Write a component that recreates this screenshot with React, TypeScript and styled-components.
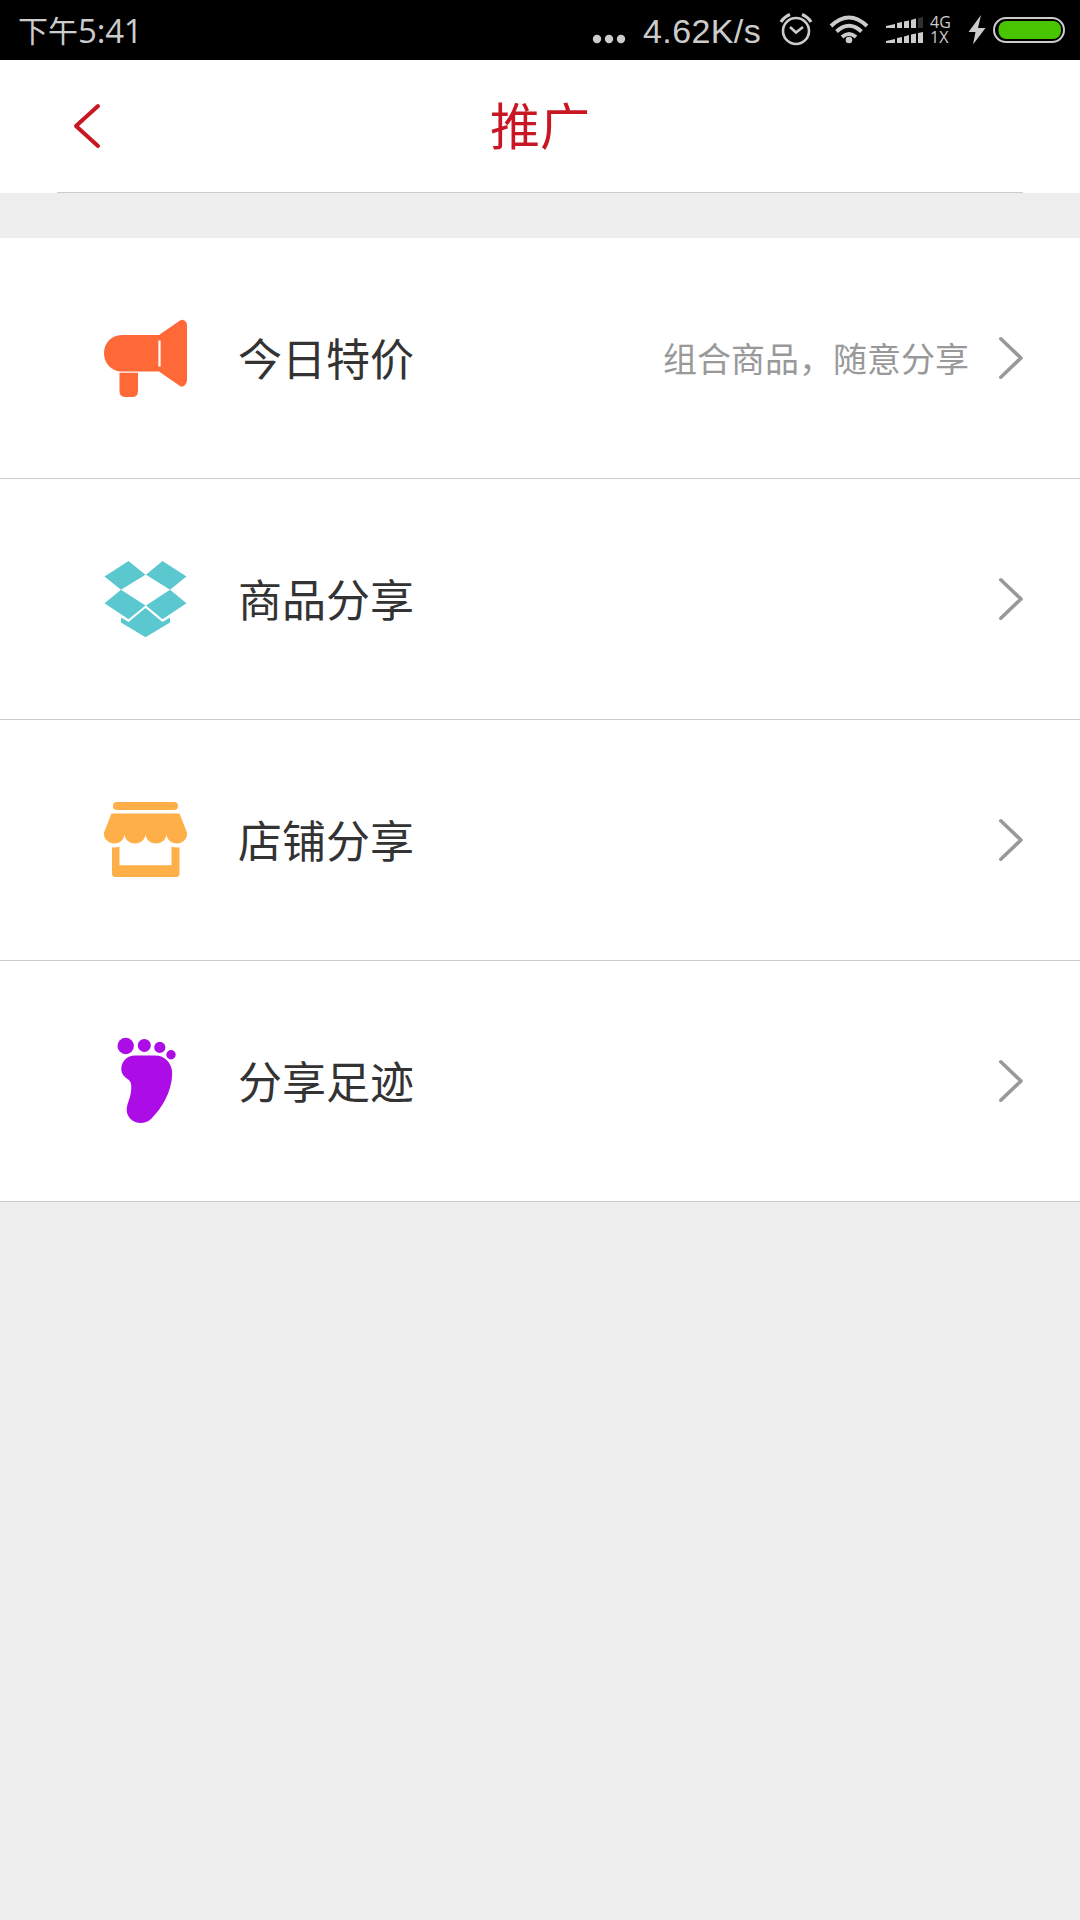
import React from "react";
import styled, { createGlobalStyle } from "styled-components";

const Global = createGlobalStyle`
  * { box-sizing: border-box; }
  body { margin: 0; background: #eee; font-family: "Noto Sans CJK SC", "Noto Sans", sans-serif; }
`;

const Screen = styled.div`
  width: 1080px;
  height: 1920px;
  display: flex;
  flex-direction: column;
  background: #eee;
`;

const StatusBar = styled.header`
  height: 60px;
  display: flex;
  justify-content: space-between;
  padding: 0 14px 0 18px;
  background: #000;
  color: #ccc;
`;

const Clock = styled.div`
  display: flex;
  font-size: 30px;
  line-height: 59px;
  white-space: nowrap;
`;

const Digits = styled.span`
  font-family: "Open Sans", sans-serif;
  font-size: 33px;
  line-height: 62px;
  letter-spacing: -0.2px;
`;

const StatusItems = styled.div`
  display: flex;
  height: 60px;
`;

const Speed = styled.div`
  font-family: "Liberation Sans", sans-serif;
  font-size: 34px;
  line-height: 62px;
  letter-spacing: 0.4px;
  width: 119px;
  margin: 0 17px;
  white-space: nowrap;
`;

const Network = styled.div`
  display: flex;
  flex-direction: column;
  width: 38px;
  margin-left: 7px;
  padding-top: 15px;
  font-family: "Open Sans", sans-serif;
  font-size: 16px;
  line-height: 15px;
`;

const TitleBar = styled.nav`
  height: 133px;
  flex: none;
  display: grid;
  grid-template-columns: 1fr auto 1fr;
  padding: 0 57px;
  background: #fff;
`;

const Cell = styled.div`
  border-bottom: 1px solid #ccc;
  display: flex;
`;

const Title = styled.h1`
  margin: 0;
  font-size: 50px;
  font-weight: 400;
  line-height: 126px;
  color: #c91623;
  border-bottom: 1px solid #ccc;
`;

const List = styled.ul`
  list-style: none;
  margin: 45px 0 0;
  padding: 0;
`;

const Row = styled.li`
  height: 241px;
  display: flex;
  align-items: center;
  padding: 0 55px 0 102px;
  background: #fff;
  border-bottom: 1px solid #ccc;
`;

const Label = styled.span`
  margin-left: 48px;
  padding-bottom: 2px;
  flex: 1;
  font-size: 44px;
  line-height: 64px;
  color: #333;
`;

const Hint = styled.span`
  padding-bottom: 1px;
  font-size: 34px;
  line-height: 50px;
  color: #999;
`;

const Drawing = styled.svg`
  display: block;
  flex: none;
`;

const Megaphone = () => (
  <Drawing width="88" height="88" viewBox="0 0 88 88" fill="#ff6938">
    <path d="M20 21H57L78 6.500Q80.500 5 82.500 6.500Q85 8 85 11V66Q85 69.500 82.500 71.500Q80.500 73.500 78 72L57 57.500H20C9 57.500 2 49 2 39.200S9 21 20 21Z" />
    <path d="M17.500 58.700H36V77Q36 83 30 83H23.500Q17.500 83 17.500 77Z" />
    <path d="M57.500 26.500V52.500" stroke="#fff" strokeWidth="2.200" />
  </Drawing>
);

const Box = () => (
  <Drawing width="88" height="88" viewBox="0 0 88 88" fill="#5bc8cf">
    <path d="M26.500 6L43.500 19.800L19 34.800L2.500 21.500ZM60.500 6L84.500 21.500L68 34.800L44 19.800ZM19 34.800L43.500 50.500L26.500 64.300L2.500 48.300ZM68 34.800L84.500 48.300L60.500 64.300L44 50.500Z" />
    <path d="M43.500 53L60.500 67L68 62.500V67.500L43.500 82.300L19 67.500V62.500L26.500 67Z" />
  </Drawing>
);

const Shop = () => (
  <Drawing width="88" height="88" viewBox="0 0 88 88" fill="#ffaf48">
    <rect x="11" y="6" width="65" height="8" rx="4" />
    <path d="M9.500 17.500H77.500L85 36.500C86 42 81 47.500 75 47.500C69 47.500 64.500 43 64.500 38C64.500 43 60 47.500 54 47.500S43.500 43 43.500 38C43.500 43 39 47.500 33 47.500S22.500 43 22.500 38C22.500 43 18 47.500 12.500 47.500C6 47.500 1 42 2 36.500Z" />
    <path d="M10 51.200Q14 52 17.500 50.500V69.300H69.500V50.500Q73 52 77.500 51.200V77.500Q77.500 81 74 81H13.500Q10 81 10 77.500Z" />
  </Drawing>
);

const Foot = () => (
  <Drawing width="88" height="88" viewBox="0 0 88 88" fill="#ac0de6">
    <circle cx="23.700" cy="9" r="8.200" />
    <circle cx="42.300" cy="8.400" r="6.500" />
    <circle cx="57.800" cy="10.400" r="5.600" />
    <circle cx="69" cy="17.800" r="4.700" />
    <path d="M33 18.500H53C63 18.500 70.300 26 70.200 37C69.700 55 60 71 49.500 81.500C46 85 42 86 38.700 86C31 86 24.700 80 24.700 73C24.700 66 29.300 61 29.300 50C29.300 44 27 43 23.500 40.500C20.500 38 19.300 35.500 19.300 32.300C19.300 24.500 25 18.500 33 18.500Z" />
  </Drawing>
);

const Arrow = styled(Drawing)`
  margin-left: 29px;
`;

const rows = [
  { label: "今日特价", hint: "组合商品，随意分享", Icon: Megaphone },
  { label: "商品分享", hint: "", Icon: Box },
  { label: "店铺分享", hint: "", Icon: Shop },
  { label: "分享足迹", hint: "", Icon: Foot },
];

export default function App() {
  return (
    <Screen>
      <Global />
      <StatusBar>
        <Clock>下午<Digits>5:41</Digits></Clock>
        <StatusItems>
          <Drawing width="35" height="60" viewBox="591 0 35 60" fill="#ccc">
            <circle cx="597" cy="39" r="4.200" />
            <circle cx="609" cy="39" r="4.200" />
            <circle cx="621" cy="39" r="4.200" />
          </Drawing>
          <Speed>4.62K/s</Speed>
          <Drawing width="144" height="60" viewBox="779 0 144 60" fill="none" stroke="#ccc">
            <circle cx="796" cy="31" r="13" strokeWidth="2.600" />
            <path d="M790 27L796 32.500L803 27" strokeWidth="2.600" />
            <path d="M781 22Q784 17 790 14.500M802 14.500Q808 17 811 22" strokeWidth="3.200" />
            <path d="M831 26Q849 9 867 26M836.500 31.500Q849 20 861.500 31.500M842 37Q849 31 856 37" strokeWidth="4" />
            <circle cx="849" cy="40" r="3.300" fill="#ccc" stroke="none" />
            <g fill="#ccc" stroke="none">
              <path d="M886 26L895 24V28H886ZM897 23L902 22V28H897ZM904 21.500L909 20.500V28H904ZM911 20L916 18.500V28H911Z" />
              <path d="M918 18L923 17V28H918Z" fill="#303030" />
              <path d="M886 41L895 39V43H886ZM897 38L902 37V43H897ZM904 36.500L909 35V43H904ZM911 34.500L916 33.500V43H911ZM918 33L923 32V43H918Z" />
            </g>
          </Drawing>
          <Network><span>4G</span><span>1X</span></Network>
          <Drawing width="98" height="60" viewBox="968 0 98 60">
            <path d="M981 15L968.500 32H975.500L973 44.500L985.500 28H978Z" fill="#ccc" />
            <rect x="994" y="18" width="70" height="24" rx="12" fill="none" stroke="#ccc" strokeWidth="2" />
            <rect x="998.500" y="21" width="62.500" height="18" rx="8" fill="#48c400" />
          </Drawing>
        </StatusItems>
      </StatusBar>
      <TitleBar>
        <Cell>
          <Drawing width="60" height="132" viewBox="57 60 60 132" fill="none" stroke="#c91623" strokeWidth="4" strokeLinecap="round" strokeLinejoin="round">
            <path d="M98 106L76 126L98 146" />
          </Drawing>
        </Cell>
        <Title>推广</Title>
        <Cell />
      </TitleBar>
      <List>
        {rows.map(({ label, hint, Icon }) => (
          <Row key={label}>
            <Icon />
            <Label>{label}</Label>
            {hint && <Hint>{hint}</Hint>}
            <Arrow width="27" height="46" viewBox="0 0 27 46" fill="none" stroke="#999" strokeWidth="3.600" strokeLinecap="round" strokeLinejoin="round">
              <path d="M2.800 3.800L23 23L2.800 42.200" />
            </Arrow>
          </Row>
        ))}
      </List>
    </Screen>
  );
}
